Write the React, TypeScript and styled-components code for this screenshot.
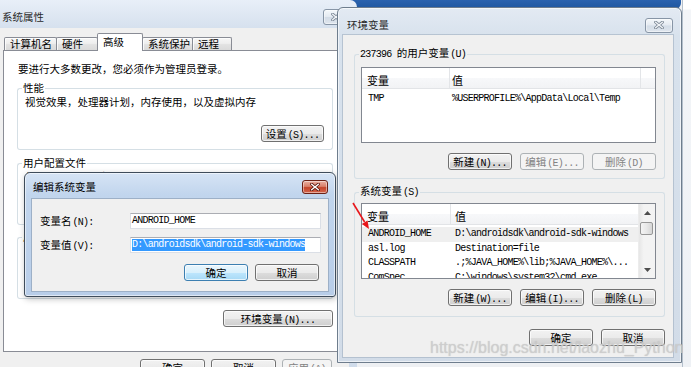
import React from "react";
import styled, { createGlobalStyle } from "styled-components";

const UI = `"Noto Sans CJK SC", "Noto Sans", sans-serif`;
const MONO = `"Liberation Mono", "DejaVu Sans Mono", monospace`;

const GlobalStyle = createGlobalStyle`
  html, body { margin: 0; padding: 0; }
  body { background: #f0f0f0; font-family: ${UI}; }
  *, *::before, *::after { box-sizing: border-box; }
`;

/* ---------- shared bits ---------- */

const A = styled.span<{ $gap?: number }>`
  font-family: ${MONO};
  font-size: 10px;
  letter-spacing: -0.75px;
  margin-left: ${p => (p.$gap ?? 1)}px;
`;

const Desktop = styled.div`
  position: relative;
  width: 691px;
  height: 367px;
  overflow: hidden;
  background: #eef0f3;
  font-family: ${UI};
  font-size: 10.5px;
  line-height: 12px;
  color: #000;
`;

const BehindTitle = styled.div`
  position: absolute;
  left: 300px;
  top: -22px;
  width: 381px;
  height: 31px;
  border-radius: 0 0 6px 0;
  background: linear-gradient(180deg, #5a92d6 0%, #2f67b4 60%, #1f569f 100%);
`;

const BehindSide = styled.div`
  position: absolute;
  left: 682px;
  top: 0;
  width: 9px;
  height: 367px;
  background: linear-gradient(180deg, #ffffff 0px, #ffffff 9px, #f3f5f8 10px, #eef1f5 100%);
  border-left: 1px solid #b4c0cc;
`;

const Button = styled.div<{ $w: number; $v?: "normal" | "disabled" | "focus" }>`
  width: ${p => p.$w}px;
  height: 17px;
  flex-shrink: 0;
  border-radius: 3px;
  text-align: center;
  line-height: 15px;
  white-space: nowrap;
  overflow: hidden;
  border: 1px solid
    ${p => (p.$v === "disabled" ? "#adb2b5" : p.$v === "focus" ? "#3c7fb1" : "#707070")};
  color: ${p => (p.$v === "disabled" ? "#838383" : "#000")};
  background: ${p =>
    p.$v === "disabled"
      ? "#f4f4f4"
      : p.$v === "focus"
      ? "linear-gradient(180deg, #eaf6fd 0%, #d9f0fc 50%, #bee6fd 51%, #a7d9f5 100%)"
      : "linear-gradient(180deg, #f2f2f2 0%, #ebebeb 50%, #dddddd 51%, #cfcfcf 100%)"};
  box-shadow: inset 0 0 0 1px rgba(255, 255, 255, ${p => (p.$v === "disabled" ? 0 : 0.7)});
`;

const ButtonRow = styled.div<{ $mt: number; $gap?: number; $pr?: number }>`
  display: flex;
  justify-content: flex-end;
  gap: ${p => p.$gap ?? 8}px;
  margin-top: ${p => p.$mt}px;
  padding-right: ${p => p.$pr ?? 0}px;
`;

const CloseBtn = styled.div<{ $red?: boolean; $w: number; $h: number }>`
  width: ${p => p.$w}px;
  height: ${p => p.$h}px;
  flex-shrink: 0;
  border-radius: 3px;
  display: flex;
  align-items: center;
  justify-content: center;
  border: 1px solid ${p => (p.$red ? "#6b2116" : "#8795a6")};
  background: ${p =>
    p.$red
      ? "linear-gradient(180deg, #eab0a2 0%, #d9806b 45%, #c4442b 55%, #d4674d 100%)"
      : "linear-gradient(180deg, #f5f8fb 0%, #e4eaf1 48%, #d3dce7 52%, #dfe6ee 100%)"};
  box-shadow: inset 0 0 0 1px rgba(255, 255, 255, 0.45);
`;

const XIcon: React.FC<{ red?: boolean }> = ({ red }) => (
  <svg width="10" height="8" viewBox="0 0 10 8">
    <path
      d="M1.6 1.2 L8.4 6.8 M8.4 1.2 L1.6 6.8"
      stroke={red ? "#5a1a12" : "#7c8896"}
      strokeWidth="3"
      strokeLinecap="round"
    />
    <path
      d="M1.6 1.2 L8.4 6.8 M8.4 1.2 L1.6 6.8"
      stroke={red ? "#ffffff" : "#f1f4f7"}
      strokeWidth="1.4"
      strokeLinecap="round"
    />
  </svg>
);

/* group box drawn in flow: head line with label, then body */
const Group = styled.div<{ $mt: number }>`
  display: flex;
  flex-direction: column;
  margin-top: ${p => p.$mt}px;
`;

const GroupHead = styled.div`
  display: flex;
  align-items: flex-end;
  height: 12px;
  &::before {
    content: "";
    width: 5px;
    height: 6px;
    border-top: 1px solid #d5dfe5;
    border-left: 1px solid #d5dfe5;
    border-top-left-radius: 3px;
  }
  &::after {
    content: "";
    flex: 1;
    height: 6px;
    border-top: 1px solid #d5dfe5;
    border-right: 1px solid #d5dfe5;
    border-top-right-radius: 3px;
  }
`;

const GroupLabel = styled.span`
  align-self: center;
  padding: 0 1px;
  line-height: 12px;
  white-space: nowrap;
`;

const GroupBody = styled.div<{ $pad: string }>`
  display: flex;
  flex-direction: column;
  border: 1px solid #d5dfe5;
  border-top: none;
  border-radius: 0 0 3px 3px;
  padding: ${p => p.$pad};
`;

const Line = styled.div<{ $pl?: number }>`
  line-height: 12px;
  padding-left: ${p => p.$pl ?? 0}px;
  white-space: nowrap;
`;

/* ---------- 系统属性 window ---------- */

const SysWin = styled.div`
  position: absolute;
  left: 0;
  top: 0;
  width: 357px;
  height: 392px;
  display: flex;
  flex-direction: column;
  border-top-right-radius: 7px;
  background: linear-gradient(180deg, #e8eff8 0px, #d6e1ee 28px, #cfdbea 100%);
`;

const SysTitle = styled.div`
  height: 28px;
  padding: 6px 8px 0 2px;
  display: flex;
  align-items: center;
  justify-content: space-between;
  color: #2a2a2a;
`;

const SysClient = styled.div`
  flex: 1;
  margin-right: 8px;
  padding: 5px 0 0 3px;
  background: #f0f0f0;
  display: flex;
  flex-direction: column;
`;

const TabRow = styled.div`
  display: flex;
  align-items: flex-end;
  height: 18px;
  margin-bottom: -1px;
  padding-left: 1px;
  position: relative;
  z-index: 1;
`;

const Tab = styled.div<{ $w: number; $active?: boolean }>`
  width: ${p => p.$w}px;
  height: ${p => (p.$active ? 18 : 13)}px;
  margin-bottom: ${p => (p.$active ? 0 : 1)}px;
  border: 1px solid #898c95;
  border-bottom: none;
  border-radius: 2px 2px 0 0;
  padding: ${p => (p.$active ? "2px 0 0 5px" : "0 0 0 5px")};
  line-height: 12px;
  white-space: nowrap;
  background: ${p =>
    p.$active
      ? "#ffffff"
      : "linear-gradient(180deg, #f6f6f6 0%, #eeeeee 45%, #e2e2e2 55%, #dadada 100%)"};
  box-shadow: inset 1px 1px 0 rgba(255, 255, 255, 0.8);
  position: relative;
  z-index: ${p => (p.$active ? 2 : 1)};
  &:not(:first-child) {
    margin-left: -1px;
  }
`;

const Panel = styled.div`
  height: 302px;
  background: #ffffff;
  border: 1px solid #898c95;
  padding: 12px 15px 0 13px;
  display: flex;
  flex-direction: column;
`;

/* ---------- 编辑系统变量 dialog ---------- */

const EditDlg = styled.div`
  position: absolute;
  left: 24px;
  top: 172px;
  width: 312px;
  height: 125px;
  border: 1px solid #3f4c5a;
  border-radius: 6px 6px 3px 3px;
  background: linear-gradient(180deg, #d6e4f5 0%, #c1d5ed 22px, #b8cde8 100%);
  box-shadow: inset 0 0 0 1px rgba(255, 255, 255, 0.55), 1px 2px 6px rgba(0, 0, 0, 0.25);
  display: flex;
  flex-direction: column;
`;

const EditTitle = styled.div`
  height: 25px;
  padding: 3px 7px 0 8px;
  display: flex;
  align-items: center;
  justify-content: space-between;
  color: #000;
`;

const EditClient = styled.div`
  flex: 1;
  margin: 0 6px 4px 6px;
  border: 1px solid #9db0c7;
  background: #f0f0f0;
  padding: 14px 9px 0 8px;
  display: flex;
  flex-direction: column;
`;

const FieldGrid = styled.div`
  display: grid;
  grid-template-columns: 90px 191px;
  row-gap: 8px;
  align-items: center;
`;

const FieldLabel = styled.div`
  line-height: 12px;
  padding-top: 1px;
  white-space: nowrap;
`;

const TextBox = styled.div`
  height: 16px;
  background: #ffffff;
  border: 1px solid #dbdfe6;
  border-top-color: #abadb3;
  padding: 0 0 0 1px;
  display: flex;
  align-items: center;
  font-family: ${MONO};
  font-size: 10px;
  letter-spacing: -0.75px;
  white-space: nowrap;
  overflow: hidden;
`;

const Selected = styled.span`
  background: #3399ff;
  color: #ffffff;
  line-height: 12px;
`;

/* ---------- 环境变量 window ---------- */

const EnvWin = styled.div`
  position: absolute;
  left: 337px;
  top: 7px;
  width: 345px;
  height: 356px;
  border: 1px solid #6e7d8d;
  border-radius: 6px 6px 0 0;
  background: linear-gradient(180deg, #e3eaf3 0px, #d8e2ed 28px, #d2dce8 100%);
  box-shadow: inset 0 0 0 1px rgba(255, 255, 255, 0.6);
  display: flex;
  flex-direction: column;
`;

const EnvTitle = styled.div`
  height: 27px;
  padding: 7px 8px 0 9px;
  display: flex;
  align-items: center;
  justify-content: space-between;
  color: #2a2a2a;
`;

const EnvClient = styled.div`
  flex: 1;
  margin: 0 8px 5px 5px;
  background: #f0f0f0;
  box-shadow: 0 0 0 1px rgba(160, 175, 192, 0.6);
  padding: 13px 8px 0 11px;
  display: flex;
  flex-direction: column;
`;

const ListBox = styled.div`
  height: 76px;
  border: 1px solid #828790;
  background: #ffffff;
  display: flex;
  overflow: hidden;
`;

const ListMain = styled.div`
  flex: 1;
  min-width: 0;
  display: flex;
  flex-direction: column;
  overflow: hidden;
`;

const HeaderRow = styled.div`
  height: 21px;
  flex-shrink: 0;
  display: flex;
  border-bottom: 1px solid #e2e4e7;
  background: linear-gradient(180deg, #ffffff 0%, #ffffff 50%, #f7f8fa 51%, #f2f3f5 100%);
`;

const HeadCell = styled.div<{ $w?: number; $pad: number; $div?: boolean }>`
  ${p => (p.$w ? `width: ${p.$w}px; flex-shrink: 0;` : "flex: 1;")}
  padding: 3px 0 0 ${p => p.$pad}px;
  display: flex;
  align-items: center;
  font-size: 11px;
  border-right: ${p => (p.$div ? "1px solid #e3e5e8" : "none")};
`;

const Rows = styled.div<{ $pt: number }>`
  padding-top: ${p => p.$pt}px;
  display: flex;
  flex-direction: column;
`;

const Row = styled.div<{ $hl?: boolean }>`
  height: 14.5px;
  flex-shrink: 0;
  display: flex;
  align-items: center;
  background: ${p => (p.$hl ? "#efefef" : "transparent")};
  font-family: ${MONO};
  font-size: 10px;
  letter-spacing: -0.75px;
  white-space: nowrap;
`;

const Cell = styled.div<{ $w?: number; $pad: number }>`
  ${p => (p.$w ? `width: ${p.$w}px; flex-shrink: 0;` : "flex: 1; min-width: 0;")}
  padding-left: ${p => p.$pad}px;
  overflow: hidden;
`;

const ScrollBar = styled.div`
  width: 17px;
  flex-shrink: 0;
  display: flex;
  flex-direction: column;
  background: linear-gradient(90deg, #e6e6e6 0%, #f3f3f3 30%, #f3f3f3 100%);
  border-left: 1px solid #ececec;
`;

const ScrollArrow = styled.div`
  height: 17px;
  display: flex;
  align-items: center;
  justify-content: center;
`;

const Thumb = styled.div`
  height: 13px;
  margin: 1px 2px 0 1px;
  border: 1px solid #979797;
  border-radius: 2px;
  background: linear-gradient(90deg, #f4f4f4 0%, #e8e8e8 50%, #d6d6d6 100%);
`;

const Track = styled.div`
  flex: 1;
`;

const Arrow: React.FC<{ down?: boolean }> = ({ down }) => (
  <svg width="7" height="4" viewBox="0 0 7 4">
    <path d={down ? "M0 0 L7 0 L3.5 4 Z" : "M0 4 L7 4 L3.5 0 Z"} fill="#4d4d4d" />
  </svg>
);

/* ---------- overlays ---------- */

const Pointer = styled.svg`
  position: absolute;
  left: 348px;
  top: 198px;
  width: 26px;
  height: 35px;
`;

const Watermark = styled.div`
  position: absolute;
  left: 430px;
  top: 339px;
  font-family: "Liberation Sans", Arial, sans-serif;
  font-size: 16px;
  line-height: 18px;
  color: rgba(206, 206, 206, 0.85);
  text-shadow: 0 0 1px rgba(150, 150, 150, 0.45);
  white-space: nowrap;
`;

/* ---------- data ---------- */

const tabs = [
  { label: "计算机名", w: 53 },
  { label: "硬件", w: 42 },
  { label: "高级", w: 46, active: true },
  { label: "系统保护", w: 51 },
  { label: "远程", w: 40 },
];

const sysVars = [
  { k: "ANDROID_HOME", v: "D:\\androidsdk\\android-sdk-windows", hl: true },
  { k: "asl.log", v: "Destination=file" },
  { k: "CLASSPATH", v: ".;%JAVA_HOME%\\lib;%JAVA_HOME%\\..." },
  { k: "ComSpec", v: "C:\\windows\\system32\\cmd.exe" },
];

export default function App() {
  return (
    <>
      <GlobalStyle />
      <Desktop>
        <BehindTitle />
        <BehindSide />

        <SysWin>
          <SysTitle>
            <span>系统属性</span>
            <CloseBtn $w={26} $h={16}>
              <XIcon />
            </CloseBtn>
          </SysTitle>
          <SysClient>
            <TabRow>
              {tabs.map(t => (
                <Tab key={t.label} $w={t.w} $active={t.active}>
                  {t.label}
                </Tab>
              ))}
            </TabRow>
            <Panel>
              <Line $pl={1}>要进行大多数更改，您必须作为管理员登录。</Line>
              <Group $mt={7}>
                <GroupHead>
                  <GroupLabel>性能</GroupLabel>
                </GroupHead>
                <GroupBody $pad="2px 8px 7px 7px">
                  <Line>视觉效果，处理器计划，内存使用，以及虚拟内存</Line>
                  <ButtonRow $mt={17}>
                    <Button $w={63}>
                      设置<A>(S)...</A>
                    </Button>
                  </ButtonRow>
                </GroupBody>
              </Group>
              <Group $mt={7}>
                <GroupHead>
                  <GroupLabel>用户配置文件</GroupLabel>
                </GroupHead>
                <GroupBody $pad="2px 8px 7px 7px">
                  <Line>与您登录有关的桌面设置</Line>
                  <ButtonRow $mt={17}>
                    <Button $w={63}>
                      设置<A>(E)...</A>
                    </Button>
                  </ButtonRow>
                </GroupBody>
              </Group>
              <Group $mt={6}>
                <GroupHead>
                  <GroupLabel>启动和故障恢复</GroupLabel>
                </GroupHead>
                <GroupBody $pad="2px 8px 7px 7px">
                  <Line>系统启动、系统失败和调试信息</Line>
                  <ButtonRow $mt={17}>
                    <Button $w={63}>
                      设置<A>(T)...</A>
                    </Button>
                  </ButtonRow>
                </GroupBody>
              </Group>
              <ButtonRow $mt={11}>
                <Button $w={110}>
                  环境变量<A>(N)...</A>
                </Button>
              </ButtonRow>
            </Panel>
            <ButtonRow $mt={7} $gap={6} $pr={17}>
              <Button $w={65}>确定</Button>
              <Button $w={65}>取消</Button>
              <Button $w={50} $v="disabled">
                应用<A>(A)</A>
              </Button>
            </ButtonRow>
          </SysClient>
        </SysWin>

        <EditDlg>
          <EditTitle>
            <span>编辑系统变量</span>
            <CloseBtn $red $w={26} $h={14}>
              <XIcon red />
            </CloseBtn>
          </EditTitle>
          <EditClient>
            <FieldGrid>
              <FieldLabel>
                变量名<A>(N):</A>
              </FieldLabel>
              <TextBox>ANDROID_HOME</TextBox>
              <FieldLabel>
                变量值<A>(V):</A>
              </FieldLabel>
              <TextBox>
                <Selected>D:\androidsdk\android-sdk-windows</Selected>
              </TextBox>
            </FieldGrid>
            <ButtonRow $mt={11} $gap={7}>
              <Button $w={64} $v="focus">
                确定
              </Button>
              <Button $w={64}>取消</Button>
            </ButtonRow>
          </EditClient>
        </EditDlg>

        <EnvWin>
          <EnvTitle>
            <span>环境变量</span>
            <CloseBtn $w={28} $h={15}>
              <XIcon />
            </CloseBtn>
          </EnvTitle>
          <EnvClient>
            <Group $mt={0}>
              <GroupHead>
                <GroupLabel>
                  <A $gap={0}>237396 </A>的用户变量<A>(U)</A>
                </GroupLabel>
              </GroupHead>
              <GroupBody $pad="7px 8px 8px 6px">
                <ListBox>
                  <ListMain>
                    <HeaderRow>
                      <HeadCell $w={88} $pad={5} $div>
                        变量
                      </HeadCell>
                      <HeadCell $w={191} $pad={2} $div>
                        值
                      </HeadCell>
                      <HeadCell $pad={0} />
                    </HeaderRow>
                    <Rows $pt={3}>
                      <Row>
                        <Cell $w={88} $pad={6}>
                          TMP
                        </Cell>
                        <Cell $pad={2}>%USERPROFILE%\AppData\Local\Temp</Cell>
                      </Row>
                    </Rows>
                  </ListMain>
                </ListBox>
                <ButtonRow $mt={10}>
                  <Button $w={64}>
                    新建<A>(N)...</A>
                  </Button>
                  <Button $w={64} $v="disabled">
                    编辑<A>(E)...</A>
                  </Button>
                  <Button $w={64} $v="disabled">
                    删除<A>(D)</A>
                  </Button>
                </ButtonRow>
              </GroupBody>
            </Group>

            <Group $mt={7}>
              <GroupHead>
                <GroupLabel>
                  系统变量<A>(S)</A>
                </GroupLabel>
              </GroupHead>
              <GroupBody $pad="5px 8px 10px 6px">
                <ListBox>
                  <ListMain>
                    <HeaderRow>
                      <HeadCell $w={89} $pad={5} $div>
                        变量
                      </HeadCell>
                      <HeadCell $pad={4}>值</HeadCell>
                    </HeaderRow>
                    <Rows $pt={2}>
                      {sysVars.map(r => (
                        <Row key={r.k} $hl={r.hl}>
                          <Cell $w={89} $pad={6}>
                            {r.k}
                          </Cell>
                          <Cell $pad={4}>{r.v}</Cell>
                        </Row>
                      ))}
                    </Rows>
                  </ListMain>
                  <ScrollBar>
                    <ScrollArrow>
                      <Arrow />
                    </ScrollArrow>
                    <Thumb />
                    <Track />
                    <ScrollArrow>
                      <Arrow down />
                    </ScrollArrow>
                  </ScrollBar>
                </ListBox>
                <ButtonRow $mt={10}>
                  <Button $w={64}>
                    新建<A>(W)...</A>
                  </Button>
                  <Button $w={64}>
                    编辑<A>(I)...</A>
                  </Button>
                  <Button $w={64}>
                    删除<A>(L)</A>
                  </Button>
                </ButtonRow>
              </GroupBody>
            </Group>

            <ButtonRow $mt={12}>
              <Button $w={64}>确定</Button>
              <Button $w={64}>取消</Button>
            </ButtonRow>
          </EnvClient>
        </EnvWin>

        <Pointer viewBox="0 0 26 35">
          <line x1="5" y1="5" x2="16.6" y2="24" stroke="#e8161b" strokeWidth="1.6" />
          <polygon points="21,31 13.9,25.9 19.5,22.4" fill="#e8161b" />
        </Pointer>

        <Watermark>https://blog.csdn.net/laozhu_Python</Watermark>
      </Desktop>
    </>
  );
}
